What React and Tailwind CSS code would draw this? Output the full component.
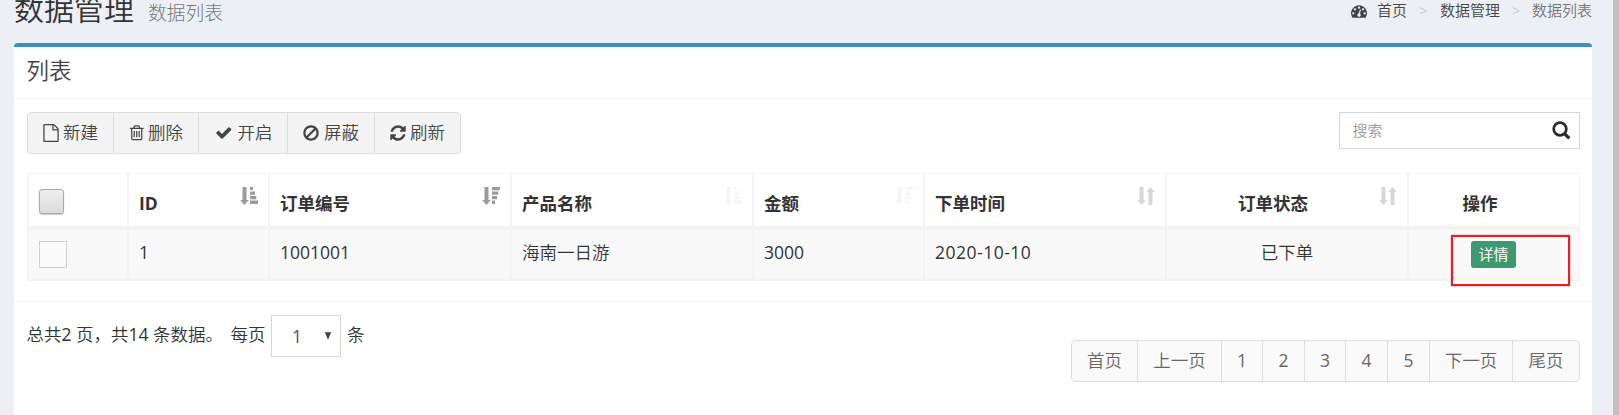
const ICONS = {
  file: "M1596 380q28 28 48 76t20 88v1152q0 40-28 68t-68 28h-1344q-40 0-68-28t-28-68v-1600q0-40 28-68t68-28h896q40 0 88 20t76 48zm-444-244v376h376q-10-29-22-41l-313-313q-12-12-41-22zm384 1528v-1024h-416q-40 0-68-28t-28-68v-416h-768v1536h1280z",
  trash: "M704 736v576q0 14-9 23t-23 9h-64q-14 0-23-9t-9-23v-576q0-14 9-23t23-9h64q14 0 23 9t9 23zm256 0v576q0 14-9 23t-23 9h-64q-14 0-23-9t-9-23v-576q0-14 9-23t23-9h64q14 0 23 9t9 23zm256 0v576q0 14-9 23t-23 9h-64q-14 0-23-9t-9-23v-576q0-14 9-23t23-9h64q14 0 23 9t9 23zm128 724v-948h-896v948q0 22 7 40.5t14.5 27 10.5 8.5h832q3 0 10.5-8.5t14.5-27 7-40.5zm-672-1076h448l-48-117q-7-9-17-11h-317q-10 2-17 11zm928 32v64q0 14-9 23t-23 9h-96v948q0 83-47 143.5t-113 60.5h-832q-66 0-113-58.5t-47-141.5v-952h-96q-14 0-23-9t-9-23v-64q0-14 9-23t23-9h309l70-167q15-37 54-63t79-26h320q40 0 79 26t54 63l70 167h309q14 0 23 9t9 23z",
  check: "M1671 566q0 40-28 68l-724 724-136 136q-28 28-68 28t-68-28l-136-136-362-362q-28-28-28-68t28-68l136-136q28-28 68-28t68 28l294 295 656-657q28-28 68-28t68 28l136 136q28 28 28 68z",
  ban: "M1440 893q0-161-87-295l-754 753q137 89 297 89 111 0 211.5-43.5t173.5-116.5 116-174.5 43-212.5zm-999 299l755-754q-135-91-300-91-148 0-273 73t-198 199-73 274q0 162 89 299zm1223-299q0 157-61 300t-163.5 246-245 164-298.5 61-298.5-61-245-164-163.5-246-61-300 61-299.5 163.5-245.5 245-164 298.5-61 298.5 61 245 164 163.5 245.5 61 299.5z",
  refresh: "M1639 1056q0 5-1 7-64 268-268 434.5t-478 166.5q-146 0-282.5-55t-243.5-157l-129 129q-19 19-45 19t-45-19-19-45v-448q0-26 19-45t45-19h448q26 0 45 19t19 45-19 45l-137 137q71 66 161 102t187 36q134 0 250-65t186-179q11-17 53-117 8-23 30-23h192q13 0 22.5 9.5t9.5 22.5zm25-800v448q0 26-19 45t-45 19h-448q-26 0-45-19t-19-45 19-45l138-138q-148-137-349-137-134 0-250 65t-186 179q-11 17-53 117-8 23-30 23h-199q-13 0-22.5-9.5t-9.5-22.5v-7q65-268 270-434.5t480-166.5q146 0 284 55.5t245 156.5l130-129q19-19 45-19t45 19 19 45z",
  dashboard: "M384 1152q0-53-37.5-90.5t-90.5-37.5-90.5 37.5-37.5 90.5 37.5 90.5 90.5 37.5 90.5-37.5 37.5-90.5zm192-448q0-53-37.5-90.5t-90.5-37.5-90.5 37.5-37.5 90.5 37.5 90.5 90.5 37.5 90.5-37.5 37.5-90.5zm428 481l101-382q6-26-7.5-48.5t-38.5-29.5-48 6.5-30 39.5l-101 382q-60 5-107 43.5t-63 98.5q-20 77 20 146t117 89 146-20 89-117q16-60-6-117t-72-91zm660-33q0-53-37.5-90.5t-90.5-37.5-90.5 37.5-37.5 90.5 37.5 90.5 90.5 37.5 90.5-37.5 37.5-90.5zm-640-640q0-53-37.5-90.5t-90.5-37.5-90.5 37.5-37.5 90.5 37.5 90.5 90.5 37.5 90.5-37.5 37.5-90.5zm448 192q0-53-37.5-90.5t-90.5-37.5-90.5 37.5-37.5 90.5 37.5 90.5 90.5 37.5 90.5-37.5 37.5-90.5zm320 448q0 261-141 483-19 29-54 29h-1402q-35 0-54-29-141-221-141-483 0-182 71-348t191-286 286-191 348-71 348 71 286 191 191 286 71 348z",
};

function Icon({ name, className }) {
  return (
    <svg viewBox="0 0 1792 1792" fill="currentColor" className={`shrink-0 ${className}`}>
      <path d={ICONS[name]} />
    </svg>
  );
}

function SortIcon({ kind, className }) {
  return (
    <svg viewBox="0 0 18 18" fill="currentColor" className={`mt-[13px] h-[18px] w-[18px] shrink-0 ${className}`}>
      <path d="M2.5 0h4v13h2.2L4.5 18 .2 13h2.3z" />
      {kind === "asc" && <path d="M10 0h3v3h-3zM10 4.5h5v3.2h-5zM10 9h6.3v3.2H10zM10 13.5h8V17h-8z" />}
      {kind === "desc" && <path d="M10 0h8v3.3h-8zM10 4.5h6.3v3.2H10zM10 9h5v3.2h-5zM10 13.5h3V17h-3z" />}
      {kind === "both" && <path d="M13.5 0l4.3 5h-2.3v13h-4V5H9.2z" />}
    </svg>
  );
}

const TOOLS = [
  { icon: "file", label: "新建", box: "w-[86px] pl-[13.5px]", glyph: "h-[18px] w-[18px] mr-[3.5px]" },
  { icon: "trash", label: "删除", box: "w-[85px] pl-[13.5px]", glyph: "h-[17.5px] w-[17.5px] mr-[3px]" },
  { icon: "check", label: "开启", box: "w-[89px] pl-[15.5px]", glyph: "h-[17.5px] w-[17.5px] mr-[5.5px]" },
  { icon: "ban", label: "屏蔽", box: "w-[87px] pl-[14px]", glyph: "h-[18px] w-[18px] mr-[4px]" },
  { icon: "refresh", label: "刷新", box: "w-[85px] pl-[14px]", glyph: "h-[18px] w-[18px] mr-[3px]" },
];

const COLUMNS = [
  { label: "ID", sort: "asc", tone: "text-[#9b9b9b]", value: "1", type: "font-normal" },
  { label: "订单编号", sort: "desc", tone: "text-[#9b9b9b]", value: "1001001", type: "font-normal" },
  { label: "产品名称", sort: "asc", tone: "text-[#f6f6f6]", value: "海南一日游", type: "" },
  { label: "金额", sort: "desc", tone: "text-[#f6f6f6]", value: "3000", type: "font-normal" },
  { label: "下单时间", sort: "both", tone: "text-[#d7d7d7]", value: "2020-10-10", type: "font-normal tracking-[0.5px]" },
];

const PAGES = [
  ["首页", "w-[65px]"],
  ["上一页", "w-[84px]"],
  ["1", "w-[41px] font-normal"],
  ["2", "w-[42px] font-normal"],
  ["3", "w-[41px] font-normal"],
  ["4", "w-[42px] font-normal"],
  ["5", "w-[42px] font-normal"],
  ["下一页", "w-[83px]"],
  ["尾页", "w-[67px]"],
];

const GRID = "grid grid-cols-[99px_141px_242px_242px_171px_242px_242px_170px]";

export default function App() {
  return (
    <div className="flex h-[415px] w-full overflow-hidden bg-[#ecf0f5] font-['Open_Sans','Noto_Sans_CJK_SC',sans-serif] text-[17.5px] leading-[25px] font-[350] text-[#333]">
      <div className="flex min-w-0 flex-1 flex-col pr-[20px] pl-[14px]">
        <header className="flex h-[43px] shrink-0 justify-between">
          <h1 className="-mt-[11px] flex h-[40px] items-baseline text-[30px] leading-[40px] font-[350]">
            数据管理
            <small className="ml-[14px] text-[18.75px] font-light text-[#777]">数据列表</small>
          </h1>
          <nav className="-mt-px flex h-[22px] items-center text-[15px] leading-[22px] text-[#444]">
            <Icon name="dashboard" className="mt-[1px] mr-[10px] h-[16px] w-[16px]" />
            <span>首页</span>
            <span className="w-[33px] text-center text-[15px] font-normal text-[#ccc]">&gt;</span>
            <span>数据管理</span>
            <span className="w-[32px] text-center text-[15px] font-normal text-[#ccc]">&gt;</span>
            <span className="text-[#777]">数据列表</span>
          </nav>
        </header>

        <main className="flex flex-1 flex-col rounded-t-[4px] border-t-4 border-[#3c8dbc] bg-white">
          <h3 className="flex h-[52px] shrink-0 items-center border-b border-[#f4f4f4] pb-[3px] pl-[12.5px] text-[22.5px] leading-[28px] font-[350] text-[#444]">
            列表
          </h3>

          <div className="flex h-[74px] shrink-0 items-start justify-between px-[13px] pr-[12px] pt-[13px]">
            <div className="flex h-[42px] overflow-hidden rounded-[4px] border border-[#ddd] bg-[#f4f4f4] text-[#444]">
              {TOOLS.map((t, i) => (
                <button key={t.icon} className={`flex items-center ${t.box} ${i < 4 ? "border-r border-[#ddd]" : ""}`}>
                  <Icon name={t.icon} className={t.glyph} />
                  <span className="pb-[2px] whitespace-nowrap">{t.label}</span>
                </button>
              ))}
            </div>
            <div className="flex h-[37px] w-[241px] items-center justify-between border border-[#d2d6de] pr-[8px] pl-[12.5px] text-[15px] text-[#999]">
              <span>搜索</span>
              <svg viewBox="0 0 19 19" className="h-[19px] w-[19px] text-[#2b2b2b]" fill="none" stroke="currentColor">
                <circle cx="8" cy="8" r="6.3" strokeWidth="2.7" />
                <path d="M12.3 12.3l5 5" strokeWidth="3.2" />
              </svg>
            </div>
          </div>

          <section className="mr-[12px] ml-[13px] shrink-0 border border-[#f4f4f4]">
            <div className={`${GRID} h-[52px] font-bold`}>
              <div className="border-l border-[#f4f4f4] pt-[15px] pl-[10px]">
                <div className="h-[25px] w-[25px] rounded-[3px] border border-[#a9a9a9] bg-linear-to-b from-[#eee] to-[#dcdcdc] shadow-[0_1px_1px_#ccc]" />
              </div>
              {COLUMNS.map((c) => (
                <div key={c.label} className="flex justify-between border-l-2 border-[#f4f4f4] pr-[10.5px] pl-[10px]">
                  <span className="mt-[17px]">{c.label}</span>
                  <SortIcon kind={c.sort} className={c.tone} />
                </div>
              ))}
              <div className="flex justify-between border-l-2 border-[#f4f4f4] pr-[10.5px] pl-[71px]">
                <span className="mt-[17px]">订单状态</span>
                <SortIcon kind="both" className="text-[#d7d7d7]" />
              </div>
              <div className="border-l-2 border-[#f4f4f4] pt-[17px] pl-[53.5px]">操作</div>
            </div>
            <div className={`${GRID} h-[54px] border-t-4 border-b border-[#f4f4f4] bg-[#f9f9f9]`}>
              <div className="border-l border-[#f4f4f4] pt-[11px] pl-[10px]">
                <div className="h-[27px] w-[28px] border border-[#d2cfca] bg-[#fafafa]" />
              </div>
              {COLUMNS.map((c) => (
                <div key={c.label} className={`border-l-2 border-[#f4f4f4] pt-[10px] pl-[10px] ${c.type}`}>
                  {c.value}
                </div>
              ))}
              <div className="border-l-2 border-[#f4f4f4] pt-[10px] text-center">已下单</div>
              <div className="relative border-l-2 border-[#f4f4f4] pt-[11px] pl-[62px]">
                <span className="flex h-[27px] w-[45px] items-center justify-center rounded-[3px] bg-[#3d9970] pb-px text-[15px] leading-[22px] font-normal text-white">
                  详情
                </span>
                <div className="absolute top-[5px] left-[42px] h-[51px] w-[119px] border-2 border-[#ed1c24] shadow-[0_0_1px_#ed1c24]" />
              </div>
            </div>
          </section>

          <footer className="mt-[20px] flex flex-1 items-start justify-between border-t border-[#f4f4f4] pr-[12px] pl-[12.5px]">
            <div className="flex whitespace-pre pt-[13px]">
              <span className="w-[204px] pt-[7px]">
                总共<span className="font-normal">2</span> 页，共<span className="font-normal">14</span> 条数据。
              </span>
              <span className="w-[40.5px] pt-[7px]">每页</span>
              <div className="flex h-[42px] w-[70px] items-center border border-[#d2d6de] pr-[8px] pl-[20px] text-[#555]">
                <span className="flex-1 font-normal">1</span>
                <svg viewBox="0 0 8 8" className="h-[8px] w-[8px]" fill="#444">
                  <path d="M.8.3h6.4L4 7.7z" />
                </svg>
              </div>
              <span className="pt-[7px] pl-[6px]">条</span>
            </div>
            <div className="mt-[38px] flex h-[42px] overflow-hidden rounded-[5px] border border-[#ddd] bg-[#fafafa] text-[#666]">
              {PAGES.map(([label, width], i) => (
                <span key={label} className={`flex items-center justify-center pb-[1px] ${width} ${i ? "border-l border-[#ddd]" : ""}`}>
                  {label}
                </span>
              ))}
            </div>
          </footer>
        </main>
      </div>
      <div className="w-[1px] bg-[#f1f1f1]" />
      <div className="w-[6px] bg-[#c1c1c1]" />
    </div>
  );
}
